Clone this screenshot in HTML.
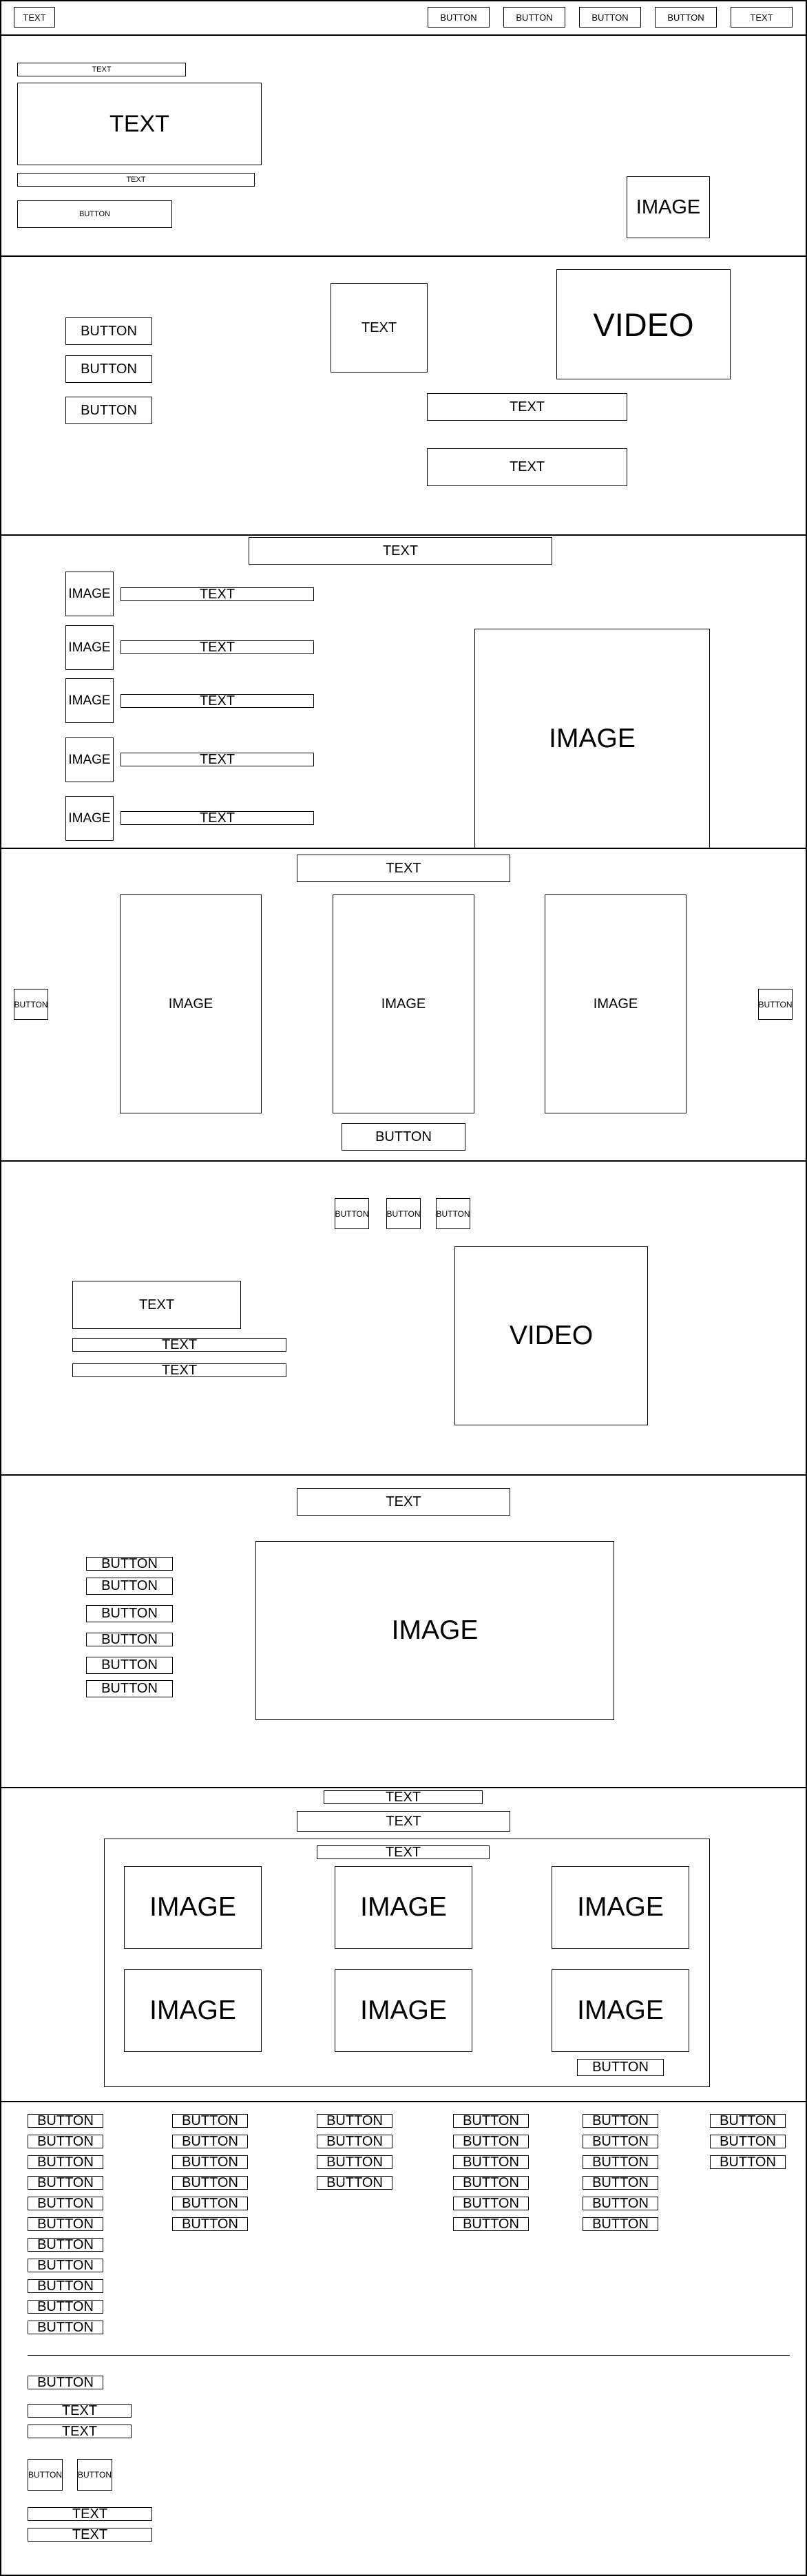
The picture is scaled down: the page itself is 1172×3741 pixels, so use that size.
<!DOCTYPE html>
<html><head><meta charset="utf-8"><style>
*{margin:0;padding:0}
body{width:1172px;height:3741px;position:relative;background:#fff;font-family:"Liberation Sans",sans-serif;color:#000;overflow:hidden}
.b{position:absolute;border:1px solid #000;box-sizing:border-box;display:flex;align-items:center;justify-content:center;white-space:nowrap;overflow:hidden;font-size:20px}
.h{position:absolute;left:0;width:1172px;height:0;border-top:2px solid #000}
.v{position:absolute;top:0;height:3741px;width:0;border-left:2px solid #000}
.s12{font-size:12px}.s11{font-size:11px}.s13{font-size:13px}
</style></head><body>
<div class="v" style="left:0"></div><div class="v" style="left:1170px"></div>
<div class="h" style="top:0"></div><div class="h" style="top:50px"></div><div class="h" style="top:371px"></div><div class="h" style="top:776px"></div><div class="h" style="top:1231px"></div><div class="h" style="top:1685px"></div><div class="h" style="top:2141px"></div><div class="h" style="top:2595px"></div><div class="h" style="top:3051px"></div><div class="h" style="top:3739px"></div>

<!-- header -->
<div class="b s13" style="left:20px;top:10px;width:60px;height:30px">TEXT</div>
<div class="b s13" style="left:621px;top:10px;width:90px;height:30px">BUTTON</div>
<div class="b s13" style="left:731px;top:10px;width:90px;height:30px">BUTTON</div>
<div class="b s13" style="left:841px;top:10px;width:90px;height:30px">BUTTON</div>
<div class="b s13" style="left:951px;top:10px;width:90px;height:30px">BUTTON</div>
<div class="b s13" style="left:1061px;top:10px;width:90px;height:30px">TEXT</div>

<!-- s2 -->
<div class="b s11" style="left:25px;top:91px;width:245px;height:20px">TEXT</div>
<div class="b" style="left:25px;top:120px;width:355px;height:120px;font-size:34px">TEXT</div>
<div class="b s11" style="left:25px;top:251px;width:345px;height:20px">TEXT</div>
<div class="b s11" style="left:25px;top:291px;width:225px;height:40px">BUTTON</div>
<div class="b" style="left:910px;top:256px;width:121px;height:90px;font-size:29px">IMAGE</div>

<!-- s3 -->
<div class="b" style="left:95px;top:461px;width:126px;height:40px">BUTTON</div>
<div class="b" style="left:95px;top:516px;width:126px;height:40px">BUTTON</div>
<div class="b" style="left:95px;top:576px;width:126px;height:40px">BUTTON</div>
<div class="b" style="left:480px;top:411px;width:141px;height:130px">TEXT</div>
<div class="b" style="left:808px;top:391px;width:253px;height:160px;font-size:47px">VIDEO</div>
<div class="b" style="left:620px;top:571px;width:291px;height:40px">TEXT</div>
<div class="b" style="left:620px;top:651px;width:291px;height:55px">TEXT</div>

<!-- s4 -->
<div class="b" style="left:361px;top:780px;width:441px;height:40px">TEXT</div>
<div class="b" style="left:95px;top:830px;width:70px;height:65px;font-size:19px">IMAGE</div>
<div class="b" style="left:95px;top:908px;width:70px;height:65px;font-size:19px">IMAGE</div>
<div class="b" style="left:95px;top:985px;width:70px;height:65px;font-size:19px">IMAGE</div>
<div class="b" style="left:95px;top:1071px;width:70px;height:65px;font-size:19px">IMAGE</div>
<div class="b" style="left:95px;top:1156px;width:70px;height:65px;font-size:19px">IMAGE</div>
<div class="b" style="left:175px;top:853px;width:281px;height:20px">TEXT</div>
<div class="b" style="left:175px;top:930px;width:281px;height:20px">TEXT</div>
<div class="b" style="left:175px;top:1008px;width:281px;height:20px">TEXT</div>
<div class="b" style="left:175px;top:1093px;width:281px;height:20px">TEXT</div>
<div class="b" style="left:175px;top:1178px;width:281px;height:20px">TEXT</div>
<div class="b" style="left:689px;top:913px;width:342px;height:320px;font-size:39px">IMAGE</div>

<!-- s5 -->
<div class="b" style="left:431px;top:1241px;width:310px;height:40px">TEXT</div>
<div class="b" style="left:174px;top:1299px;width:206px;height:318px">IMAGE</div>
<div class="b" style="left:483px;top:1299px;width:206px;height:318px">IMAGE</div>
<div class="b" style="left:791px;top:1299px;width:206px;height:318px">IMAGE</div>
<div class="b s12" style="left:20px;top:1436px;width:50px;height:45px">BUTTON</div>
<div class="b s12" style="left:1101px;top:1436px;width:50px;height:45px">BUTTON</div>
<div class="b" style="left:496px;top:1631px;width:180px;height:40px">BUTTON</div>

<!-- s6 -->
<div class="b s12" style="left:486px;top:1740px;width:50px;height:45px">BUTTON</div>
<div class="b s12" style="left:561px;top:1740px;width:50px;height:45px">BUTTON</div>
<div class="b s12" style="left:633px;top:1740px;width:50px;height:45px">BUTTON</div>
<div class="b" style="left:105px;top:1860px;width:245px;height:70px">TEXT</div>
<div class="b" style="left:105px;top:1943px;width:311px;height:20px">TEXT</div>
<div class="b" style="left:105px;top:1980px;width:311px;height:20px">TEXT</div>
<div class="b" style="left:660px;top:1810px;width:281px;height:260px;font-size:39px">VIDEO</div>

<!-- s7 -->
<div class="b" style="left:431px;top:2161px;width:310px;height:40px">TEXT</div>
<div class="b" style="left:125px;top:2261px;width:126px;height:20px">BUTTON</div>
<div class="b" style="left:125px;top:2291px;width:126px;height:25px">BUTTON</div>
<div class="b" style="left:125px;top:2331px;width:126px;height:25px">BUTTON</div>
<div class="b" style="left:125px;top:2371px;width:126px;height:20px">BUTTON</div>
<div class="b" style="left:125px;top:2406px;width:126px;height:25px">BUTTON</div>
<div class="b" style="left:125px;top:2440px;width:126px;height:25px">BUTTON</div>
<div class="b" style="left:371px;top:2238px;width:521px;height:260px;font-size:39px">IMAGE</div>

<!-- s8 -->
<div class="b" style="left:470px;top:2600px;width:231px;height:20px">TEXT</div>
<div class="b" style="left:431px;top:2630px;width:310px;height:30px">TEXT</div>
<div class="b" style="left:151px;top:2670px;width:880px;height:361px"></div>
<div class="b" style="left:460px;top:2680px;width:251px;height:20px">TEXT</div>
<div class="b" style="left:180px;top:2710px;width:200px;height:120px;font-size:39px">IMAGE</div>
<div class="b" style="left:486px;top:2710px;width:200px;height:120px;font-size:39px">IMAGE</div>
<div class="b" style="left:801px;top:2710px;width:200px;height:120px;font-size:39px">IMAGE</div>
<div class="b" style="left:180px;top:2860px;width:200px;height:120px;font-size:39px">IMAGE</div>
<div class="b" style="left:486px;top:2860px;width:200px;height:120px;font-size:39px">IMAGE</div>
<div class="b" style="left:801px;top:2860px;width:200px;height:120px;font-size:39px">IMAGE</div>
<div class="b" style="left:838px;top:2990px;width:126px;height:25px">BUTTON</div>

<!-- s9 grid -->
<div class="b" style="left:40px;top:3070px;width:110px;height:20px">BUTTON</div>
<div class="b" style="left:40px;top:3100px;width:110px;height:20px">BUTTON</div>
<div class="b" style="left:40px;top:3130px;width:110px;height:20px">BUTTON</div>
<div class="b" style="left:40px;top:3160px;width:110px;height:20px">BUTTON</div>
<div class="b" style="left:40px;top:3190px;width:110px;height:20px">BUTTON</div>
<div class="b" style="left:40px;top:3220px;width:110px;height:20px">BUTTON</div>
<div class="b" style="left:40px;top:3250px;width:110px;height:20px">BUTTON</div>
<div class="b" style="left:40px;top:3280px;width:110px;height:20px">BUTTON</div>
<div class="b" style="left:40px;top:3310px;width:110px;height:20px">BUTTON</div>
<div class="b" style="left:40px;top:3340px;width:110px;height:20px">BUTTON</div>
<div class="b" style="left:40px;top:3370px;width:110px;height:20px">BUTTON</div>
<div class="b" style="left:250px;top:3070px;width:110px;height:20px">BUTTON</div>
<div class="b" style="left:250px;top:3100px;width:110px;height:20px">BUTTON</div>
<div class="b" style="left:250px;top:3130px;width:110px;height:20px">BUTTON</div>
<div class="b" style="left:250px;top:3160px;width:110px;height:20px">BUTTON</div>
<div class="b" style="left:250px;top:3190px;width:110px;height:20px">BUTTON</div>
<div class="b" style="left:250px;top:3220px;width:110px;height:20px">BUTTON</div>
<div class="b" style="left:460px;top:3070px;width:110px;height:20px">BUTTON</div>
<div class="b" style="left:460px;top:3100px;width:110px;height:20px">BUTTON</div>
<div class="b" style="left:460px;top:3130px;width:110px;height:20px">BUTTON</div>
<div class="b" style="left:460px;top:3160px;width:110px;height:20px">BUTTON</div>
<div class="b" style="left:658px;top:3070px;width:110px;height:20px">BUTTON</div>
<div class="b" style="left:658px;top:3100px;width:110px;height:20px">BUTTON</div>
<div class="b" style="left:658px;top:3130px;width:110px;height:20px">BUTTON</div>
<div class="b" style="left:658px;top:3160px;width:110px;height:20px">BUTTON</div>
<div class="b" style="left:658px;top:3190px;width:110px;height:20px">BUTTON</div>
<div class="b" style="left:658px;top:3220px;width:110px;height:20px">BUTTON</div>
<div class="b" style="left:846px;top:3070px;width:110px;height:20px">BUTTON</div>
<div class="b" style="left:846px;top:3100px;width:110px;height:20px">BUTTON</div>
<div class="b" style="left:846px;top:3130px;width:110px;height:20px">BUTTON</div>
<div class="b" style="left:846px;top:3160px;width:110px;height:20px">BUTTON</div>
<div class="b" style="left:846px;top:3190px;width:110px;height:20px">BUTTON</div>
<div class="b" style="left:846px;top:3220px;width:110px;height:20px">BUTTON</div>
<div class="b" style="left:1031px;top:3070px;width:110px;height:20px">BUTTON</div>
<div class="b" style="left:1031px;top:3100px;width:110px;height:20px">BUTTON</div>
<div class="b" style="left:1031px;top:3130px;width:110px;height:20px">BUTTON</div>

<div style="position:absolute;left:40px;top:3420px;width:1107px;border-top:1px solid #000"></div>
<div class="b" style="left:40px;top:3450px;width:110px;height:20px">BUTTON</div>
<div class="b" style="left:40px;top:3491px;width:151px;height:20px">TEXT</div>
<div class="b" style="left:40px;top:3521px;width:151px;height:20px">TEXT</div>
<div class="b s12" style="left:40px;top:3571px;width:51px;height:46px">BUTTON</div>
<div class="b s12" style="left:112px;top:3571px;width:51px;height:46px">BUTTON</div>
<div class="b" style="left:40px;top:3641px;width:181px;height:20px">TEXT</div>
<div class="b" style="left:40px;top:3671px;width:181px;height:20px">TEXT</div>
</body></html>
